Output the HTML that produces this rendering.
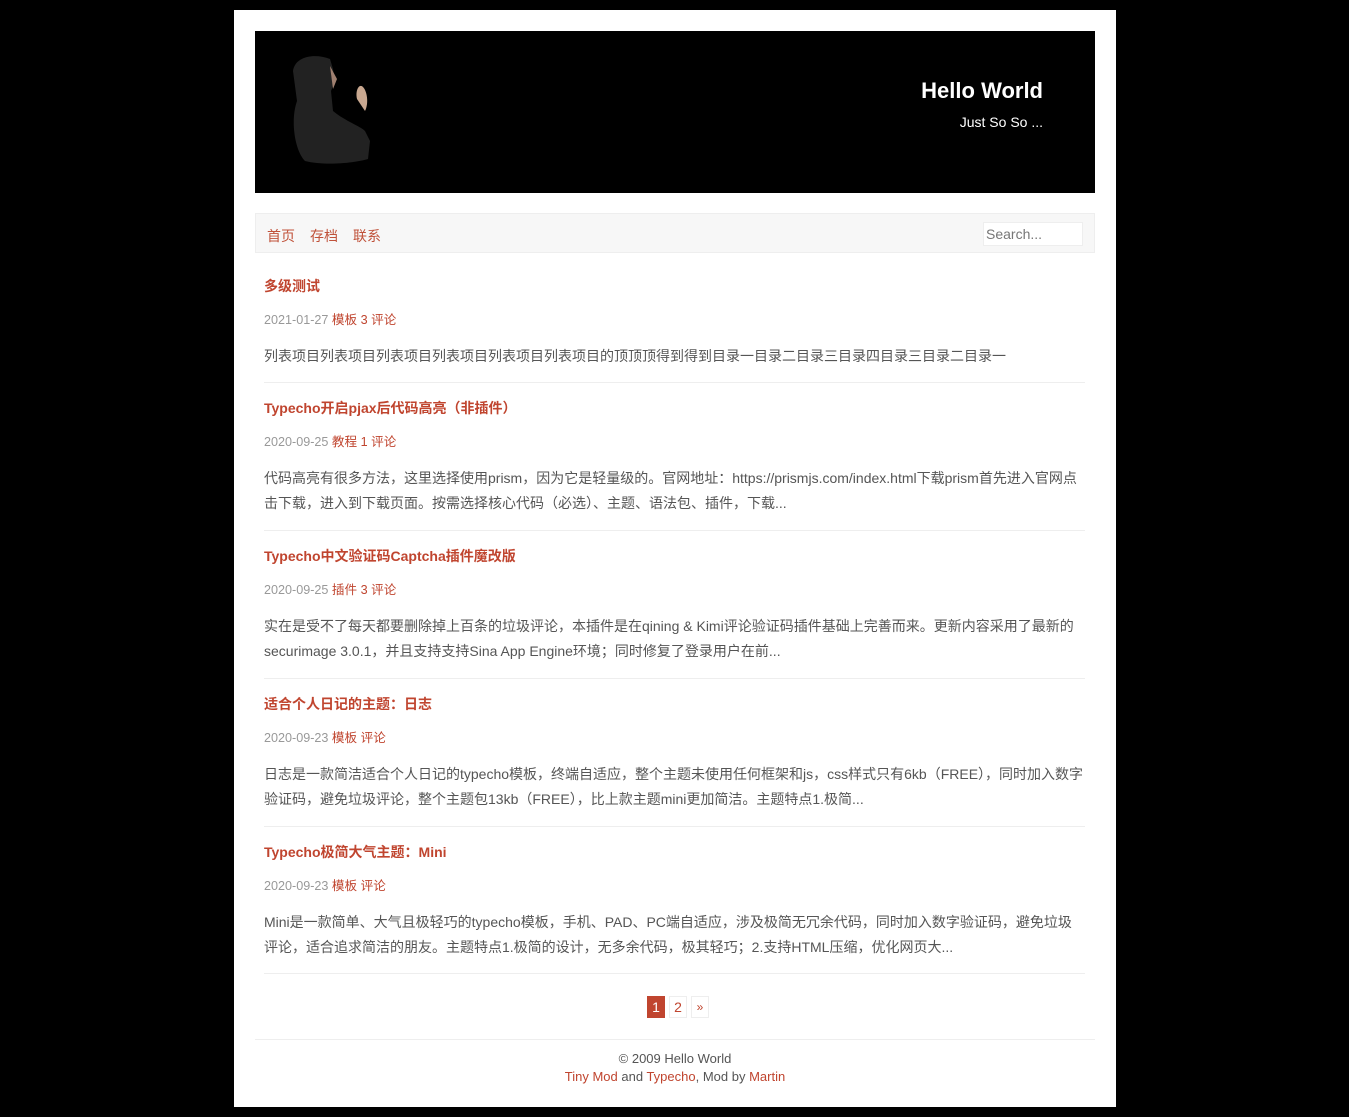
<!DOCTYPE html>
<html><head><meta charset="utf-8"><style>
*{margin:0;padding:0;box-sizing:border-box}
body{background:#000;width:1349px;height:1117px;font-family:"Liberation Sans","Noto Sans CJK SC",sans-serif;color:#555;font-size:14px}
.wrap{position:absolute;left:234px;top:10px;width:882px;height:1097px;background:#fff}
.hd{position:absolute;left:21px;top:21px;width:840px;height:162px;background:#000}
.hd h1{position:absolute;right:52px;top:47px;color:#fff;font-size:22px;font-weight:bold}
.hd p{position:absolute;right:52px;top:83px;color:#fff;font-size:14px}
.nav{position:absolute;left:21px;top:203px;width:840px;height:40px;background:#f7f7f7;border:1px solid #eee}
.nav a{position:absolute;top:12px;color:#c0523a;font-size:14px;text-decoration:none}
.nav input{position:absolute;right:11px;top:8px;width:100px;height:24px;border:1px solid #eee;background:#fff;font-size:14px;padding-left:2px;color:#777;font-family:"Liberation Sans",sans-serif}
.post{position:absolute;left:30px;width:821px;border-bottom:1px solid #eee}
.post h2{font-size:14px;font-weight:bold;color:#c0452f;height:34px;line-height:20px}
.meta{font-size:12.6px;color:#999;height:34px;line-height:20px}
.meta a{color:#c0452f}
.ex{font-size:14px;line-height:25px;color:#555}
.pg{position:absolute;top:986px;left:413px}
.pg span{position:absolute;top:0;width:18px;height:22px;border:1px solid #eee;text-align:center;line-height:20px;font-size:14px;color:#c0452f}
.ft{position:absolute;left:21px;top:1029px;width:840px;border-top:1px solid #eee;text-align:center;font-size:13px;line-height:18px;padding-top:10px;color:#555}
.ft a{color:#c0452f}
</style></head><body>
<div class="wrap">
<div class="hd">
<svg width="130" height="150" style="position:absolute;left:20px;top:10px">
<path d="M18 30 C20 15 40 12 55 18 L58 28 L60 40 L56 50 L58 70 C70 80 85 85 90 90 L95 100 L93 118 C80 122 50 125 30 120 C20 110 15 80 22 60 Z" fill="#222"/>
<path d="M55 25 L62 38 L58 48 Z" fill="#a08070"/>
<path d="M82 58 C80 50 84 42 88 46 C92 50 94 62 90 70 Z" fill="#c9a890"/>
</svg>
<h1>Hello World</h1><p>Just So So ...</p>
</div>
<div class="nav"><a style="left:11px">首页</a><a style="left:54px">存档</a><a style="left:97px">联系</a><input value="Search..."></div>
<div class="post" style="top:266px;height:107px"><h2>多级测试</h2><div class="meta">2021-01-27 <a>模板</a> <a>3 评论</a></div><div class="ex">列表项目列表项目列表项目列表项目列表项目列表项目的顶顶顶得到得到目录一目录二目录三目录四目录三目录二目录一</div></div>
<div class="post" style="top:388px;height:133px"><h2>Typecho开启pjax后代码高亮（非插件）</h2><div class="meta">2020-09-25 <a>教程</a> <a>1 评论</a></div><div class="ex">代码高亮有很多方法，这里选择使用prism，因为它是轻量级的。官网地址：https://prismjs.com/index.html下载prism首先进入官网点击下载，进入到下载页面。按需选择核心代码（必选）、主题、语法包、插件，下载...</div></div>
<div class="post" style="top:536px;height:133px"><h2>Typecho中文验证码Captcha插件魔改版</h2><div class="meta">2020-09-25 <a>插件</a> <a>3 评论</a></div><div class="ex">实在是受不了每天都要删除掉上百条的垃圾评论，本插件是在qining &amp; Kimi评论验证码插件基础上完善而来。更新内容采用了最新的securimage 3.0.1，并且支持支持Sina App Engine环境；同时修复了登录用户在前...</div></div>
<div class="post" style="top:684px;height:133px"><h2>适合个人日记的主题：日志</h2><div class="meta">2020-09-23 <a>模板</a> <a>评论</a></div><div class="ex">日志是一款简洁适合个人日记的typecho模板，终端自适应，整个主题未使用任何框架和js，css样式只有6kb（FREE），同时加入数字验证码，避免垃圾评论，整个主题包13kb（FREE），比上款主题mini更加简洁。主题特点1.极简...</div></div>
<div class="post" style="top:832px;height:132px"><h2>Typecho极简大气主题：Mini</h2><div class="meta">2020-09-23 <a>模板</a> <a>评论</a></div><div class="ex">Mini是一款简单、大气且极轻巧的typecho模板，手机、PAD、PC端自适应，涉及极简无冗余代码，同时加入数字验证码，避免垃圾评论，适合追求简洁的朋友。主题特点1.极简的设计，无多余代码，极其轻巧；2.支持HTML压缩，优化网页大...</div></div>
<div class="pg"><span style="left:0;background:#c0452f;color:#fff;border-color:#c0452f">1</span><span style="left:22px">2</span><span style="left:44px;font-size:12px">»</span></div>
<div class="ft">© 2009 Hello World<br><a>Tiny Mod</a> and <a>Typecho</a>, Mod by <a>Martin</a></div>
</div>
</body></html>
